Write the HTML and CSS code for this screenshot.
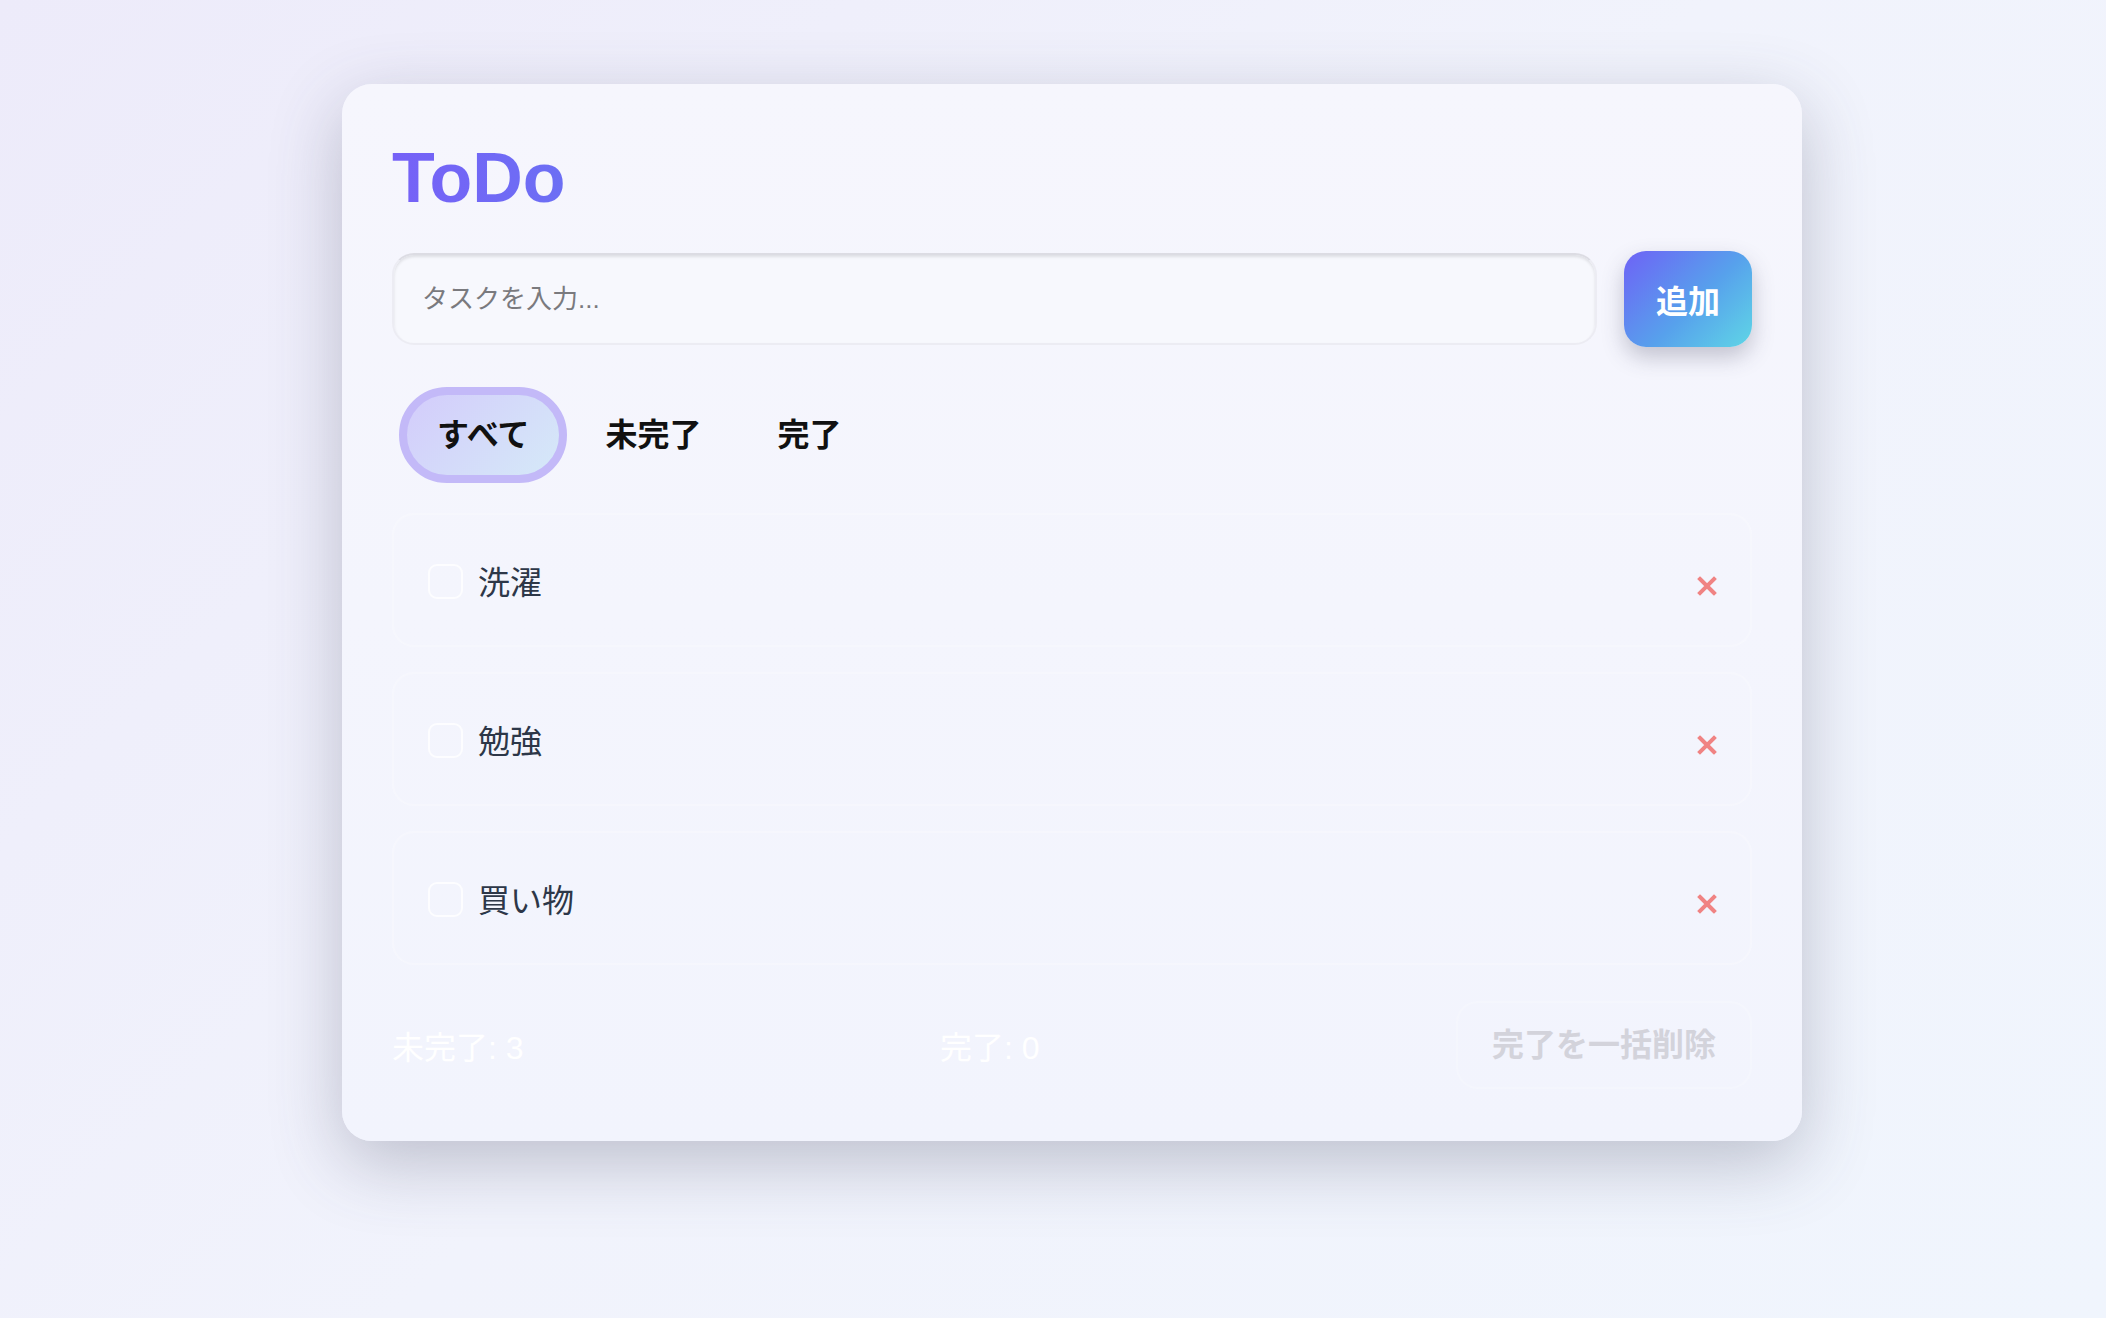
FILE: index.html
```html
<!DOCTYPE html>
<html lang="ja">
<head>
    <meta charset="UTF-8">
    <meta name="viewport" content="width=device-width, initial-scale=1.0">
    <title>ToDo</title>
    <link rel="stylesheet" href="styles.css">
</head>
<body>

    <div class="page">
        <div class="card">
            <h1 class="title">ToDo</h1>

            <div class="add-row">
                <input class="task-input" type="text" placeholder="タスクを入力...">
                <button class="add-btn">追加</button>
            </div>

            <div class="filters">
                <button class="filter active">すべて</button>
                <button class="filter">未完了</button>
                <button class="filter">完了</button>
            </div>

            <ul class="task-list">
                <li class="task">
                    <input class="check" type="checkbox">
                    <span class="task-text">洗濯</span>
                    <button class="delete" aria-label="削除">
                        <svg width="20" height="20" viewBox="0 0 20 20"><path d="M3 3 L17 17 M17 3 L3 17" stroke="#f08383" stroke-width="4" stroke-linecap="square"/></svg>
                    </button>
                </li>
                <li class="task">
                    <input class="check" type="checkbox">
                    <span class="task-text">勉強</span>
                    <button class="delete" aria-label="削除">
                        <svg width="20" height="20" viewBox="0 0 20 20"><path d="M3 3 L17 17 M17 3 L3 17" stroke="#f08383" stroke-width="4" stroke-linecap="square"/></svg>
                    </button>
                </li>
                <li class="task">
                    <input class="check" type="checkbox">
                    <span class="task-text">買い物</span>
                    <button class="delete" aria-label="削除">
                        <svg width="20" height="20" viewBox="0 0 20 20"><path d="M3 3 L17 17 M17 3 L3 17" stroke="#f08383" stroke-width="4" stroke-linecap="square"/></svg>
                    </button>
                </li>
            </ul>

            <div class="footer">
                <span class="count">未完了: 3</span>
                <span class="count">完了: 0</span>
                <button class="clear-btn">完了を一括削除</button>
            </div>
        </div>
    </div>

</body>
</html>
```

FILE: styles.css
```css
body {
    margin: 0;
    min-height: 1318px;
    font-family: "Liberation Sans", "Noto Sans CJK JP", sans-serif;
    background: linear-gradient(135deg, #edebfa 0%, #f1f3fc 50%, #f0f5fd 100%);
}
.page {
    padding: 84px 0 0 38px;
    display: flex;
    justify-content: center;
}
.card {
    width: 1360px;
    padding: 54px 50px 52px;
    border-radius: 30px;
    background: linear-gradient(180deg, #f6f6fd 0%, #f2f4fd 100%);
    box-shadow: 0 22px 70px rgba(70, 72, 100, 0.3);
}
.title {
    margin: 0 0 33px;
    font-size: 70px;
    line-height: 80px;
    font-weight: bold;
    letter-spacing: 0;
    background: linear-gradient(90deg, #7661f7, #6c6ff4);
    -webkit-background-clip: text;
    color: transparent;
    display: inline-block;
}
.add-row {
    display: flex;
    align-items: center;
    gap: 27px;
}
.task-input {
    flex: 1;
    height: 92px;
    box-sizing: border-box;
    padding: 0 28px;
    border: 2px solid #ececf3;
    border-top-color: #dcdce3;
    border-radius: 22px;
    background: #f7f8fd;
    box-shadow: inset 0 2px 3px rgba(0, 0, 0, 0.1);
    font-family: inherit;
    font-size: 26px;
    color: #333;
    outline: none;
}
.task-input::placeholder {
    color: #7a7a7e;
}
.add-btn {
    width: 128px;
    height: 96px;
    border: none;
    border-radius: 22px;
    background: linear-gradient(135deg, #6e62f6 0%, #57a1ec 55%, #5fd6e6 100%);
    box-shadow: 0 10px 22px rgba(60, 60, 90, 0.28);
    color: white;
    font-family: inherit;
    font-size: 32px;
    font-weight: bold;
}
.filters {
    display: flex;
    gap: 0;
    margin: 40px 0 30px 7px;
}
.filter {
    padding: 22px 30px;
    border: 8px solid transparent;
    border-radius: 999px;
    background: none;
    font-family: inherit;
    font-size: 32px;
    line-height: 36px;
    font-weight: bold;
    color: #111;
}
.filter.active {
    border-color: #c3b9f8;
    background: linear-gradient(135deg, #d3ccfb 0%, #d5e9f8 100%);
}
.task-list {
    list-style: none;
    margin: 0;
    padding: 0;
    display: flex;
    flex-direction: column;
    gap: 25px;
}
.task {
    height: 134px;
    box-sizing: border-box;
    display: flex;
    align-items: center;
    padding: 0 33px 0 34px;
    border: 2px solid rgba(255, 255, 255, 0.2);
    border-radius: 22px;
    background: rgba(255, 255, 255, 0.06);
}
.check {
    appearance: none;
    width: 35px;
    height: 35px;
    margin: 2px 15px 0 0;
    border: 2px solid rgba(255, 255, 255, 0.8);
    border-radius: 9px;
    background: transparent;
}
.task-text {
    flex: 1;
    font-size: 32px;
    color: #2d3748;
}
.delete {
    padding: 0;
    margin-top: 12px;
    border: none;
    background: none;
    width: 20px;
    height: 20px;
}
.footer {
    display: flex;
    justify-content: space-between;
    align-items: center;
    margin-top: 36px;
}
.count {
    font-size: 32px;
    color: #ffffff;
}
.clear-btn {
    padding: 24px 34px;
    border: 2px solid rgba(255, 255, 255, 0.15);
    border-radius: 22px;
    background: rgba(255, 255, 255, 0.05);
    font-family: inherit;
    font-size: 32px;
    line-height: 36px;
    font-weight: bold;
    color: #d3d3db;
}
```
